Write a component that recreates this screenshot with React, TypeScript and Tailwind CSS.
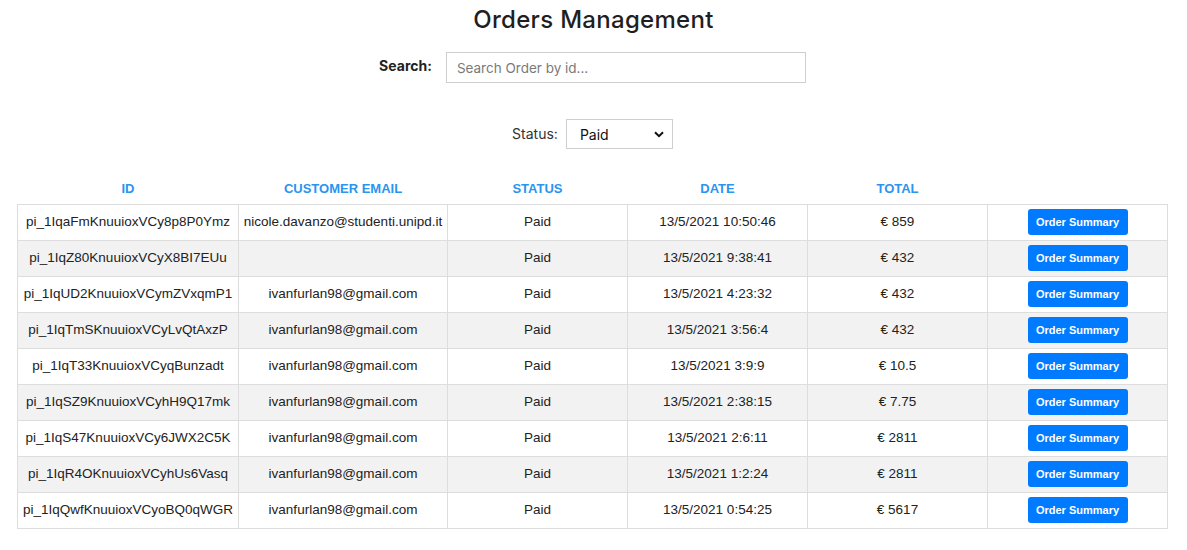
import React from 'react';

const orders = [
  { id: 'pi_1IqaFmKnuuioxVCy8p8P0Ymz', email: 'nicole.davanzo@studenti.unipd.it', date: '13/5/2021 10:50:46', total: '€ 859' },
  { id: 'pi_1IqZ80KnuuioxVCyX8BI7EUu', email: '', date: '13/5/2021 9:38:41', total: '€ 432' },
  { id: 'pi_1IqUD2KnuuioxVCymZVxqmP1', email: 'ivanfurlan98@gmail.com', date: '13/5/2021 4:23:32', total: '€ 432' },
  { id: 'pi_1IqTmSKnuuioxVCyLvQtAxzP', email: 'ivanfurlan98@gmail.com', date: '13/5/2021 3:56:4', total: '€ 432' },
  { id: 'pi_1IqT33KnuuioxVCyqBunzadt', email: 'ivanfurlan98@gmail.com', date: '13/5/2021 3:9:9', total: '€ 10.5' },
  { id: 'pi_1IqSZ9KnuuioxVCyhH9Q17mk', email: 'ivanfurlan98@gmail.com', date: '13/5/2021 2:38:15', total: '€ 7.75' },
  { id: 'pi_1IqS47KnuuioxVCy6JWX2C5K', email: 'ivanfurlan98@gmail.com', date: '13/5/2021 2:6:11', total: '€ 2811' },
  { id: 'pi_1IqR4OKnuuioxVCyhUs6Vasq', email: 'ivanfurlan98@gmail.com', date: '13/5/2021 1:2:24', total: '€ 2811' },
  { id: 'pi_1IqQwfKnuuioxVCyoBQ0qWGR', email: 'ivanfurlan98@gmail.com', date: '13/5/2021 0:54:25', total: '€ 5617' },
];

const headers = ['ID', 'CUSTOMER EMAIL', 'STATUS', 'DATE', 'TOTAL', ''];

export default function App() {
  return (
    <div className="min-h-screen bg-white px-[17px] pt-[6px] text-[#212529]">
      <h1 className="text-center font-['Inter',sans-serif] text-[24px] font-medium leading-[28px] tracking-[0.3px] text-[#1f1f1f]">
        Orders Management
      </h1>

      <div className="mt-[18px] flex items-start justify-center gap-[14px] pr-[2px]">
        <label className="pt-[3px] font-['Inter',sans-serif] text-[14px] font-bold text-[#222]">Search:</label>
        <input
          type="text"
          placeholder="Search Order by id..."
          className="h-[31px] w-[360px] border border-[#cfcfcf] px-[10px] font-['Inter',sans-serif] text-[13.5px] text-[#333] outline-none placeholder:text-[#7a7a7a]"
        />
      </div>

      <div className="mt-[36px] flex items-start justify-center gap-[8px] pr-[2px]">
        <label className="pt-[4px] font-['Inter',sans-serif] text-[14px] text-[#333]">Status:</label>
        <div className="relative h-[30px] w-[107px] border border-[#cfcfcf]">
          <select className="h-full w-full appearance-none bg-transparent pl-[13px] font-['Inter',sans-serif] text-[14px] text-[#111] outline-none">
            <option>Paid</option>
            <option>Pending</option>
            <option>All</option>
          </select>
          <svg className="pointer-events-none absolute right-[8px] top-[11px]" width="10" height="7" viewBox="0 0 10 7">
            <path d="M1 1.2 L5 5.2 L9 1.2" fill="none" stroke="#111" strokeWidth="2" />
          </svg>
        </div>
      </div>

      <table className="mt-[25px] w-[1150px] table-fixed border-collapse font-['Liberation_Sans',Arial,sans-serif]">
        <colgroup>
          <col className="w-[221px]" />
          <col className="w-[209px]" />
          <col className="w-[180px]" />
          <col className="w-[180px]" />
          <col className="w-[180px]" />
          <col className="w-[180px]" />
        </colgroup>
        <thead>
          <tr>
            {headers.map((h, i) => (
              <th key={i} className="h-[30px] pb-[1px] text-center text-[13px] font-bold text-[#2a95f0]">
                {h}
              </th>
            ))}
          </tr>
        </thead>
        <tbody>
          {orders.map((o, i) => (
            <tr key={o.id} className={i % 2 === 1 ? 'bg-[#f2f2f2]' : 'bg-white'}>
              <td className="h-[36px] whitespace-nowrap border border-[#dddddd] text-center text-[13.5px] text-[#222]">{o.id}</td>
              <td className="h-[36px] whitespace-nowrap border border-[#dddddd] text-center text-[13.5px] text-[#222]">{o.email}</td>
              <td className="h-[36px] border border-[#dddddd] text-center text-[13.5px] text-[#222]">Paid</td>
              <td className="h-[36px] border border-[#dddddd] text-center text-[13.5px] text-[#222]">{o.date}</td>
              <td className="h-[36px] border border-[#dddddd] text-center text-[13.5px] text-[#222]">{o.total}</td>
              <td className="h-[36px] border border-[#dddddd] text-center">
                <button className="h-[26px] w-[100px] rounded-[3px] bg-[#007bff] text-[11px] font-bold text-white">
                  Order Summary
                </button>
              </td>
            </tr>
          ))}
        </tbody>
      </table>
    </div>
  );
}
